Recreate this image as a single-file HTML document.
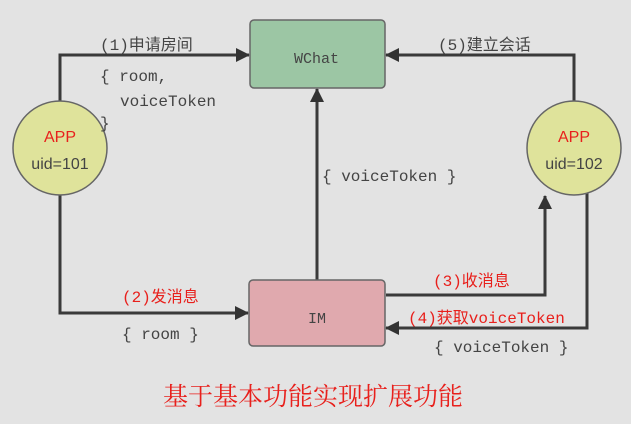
<!DOCTYPE html>
<html><head><meta charset="utf-8"><style>
body{margin:0;width:631px;height:419px;background:#e3e3e3;overflow:hidden}
.m{font-family:"Liberation Mono","Noto Sans CJK SC",monospace}
.s{font-family:"Liberation Sans","Noto Sans CJK SC",sans-serif}
</style></head><body>
<svg width="631" height="419" viewBox="0 0 631 419" xmlns="http://www.w3.org/2000/svg">
<defs><marker id="a" markerWidth="14" markerHeight="14" refX="13" refY="7" orient="auto" markerUnits="userSpaceOnUse"><path d="M0,0 L14,7 L0,14 z" fill="#333"/></marker></defs>
<g stroke="#3a3a3a" stroke-width="3" fill="none">
<path d="M60,101 V55 H249" marker-end="url(#a)"/>
<path d="M574,101 V55 H386" marker-end="url(#a)"/>
<path d="M317,280 V89" marker-end="url(#a)"/>
<path d="M60,195 V313 H248" marker-end="url(#a)"/>
<path d="M386,295 H545 V196" marker-end="url(#a)"/>
<path d="M587,193 V328 H386" marker-end="url(#a)"/>
</g>
<rect x="250" y="20" width="135" height="68" rx="4" fill="#9cc6a4" stroke="#666" stroke-width="1.5"/>
<rect x="249" y="280" width="136" height="66" rx="4" fill="#e0a9ae" stroke="#666" stroke-width="1.5"/>
<circle cx="60" cy="148" r="47" fill="#dfe39b" stroke="#666" stroke-width="1.5"/>
<circle cx="574" cy="148" r="47" fill="#dfe39b" stroke="#666" stroke-width="1.5"/>
<text class="m" x="294" y="63" font-size="15" fill="#444">WChat</text>
<text class="m" x="308" y="323" font-size="15" fill="#444">IM</text>
<g class="s" text-anchor="middle" font-size="16">
<text x="60" y="142" fill="#e8201c">APP</text>
<text x="60" y="169" fill="#444">uid=101</text>
<text x="574" y="142" fill="#e8201c">APP</text>
<text x="574" y="169" fill="#444">uid=102</text>
</g>
<g class="m" font-size="16" fill="#444">
<text x="100" y="50">(1)申请房间</text>
<text x="100" y="81">{ room,</text>
<text x="120" y="106">voiceToken</text>
<text x="100" y="128">}</text>
<text x="322" y="181">{ voiceToken }</text>
<text x="438" y="50">(5)建立会话</text>
<text x="122" y="339">{ room }</text>
<text x="434" y="352">{ voiceToken }</text>
</g>
<g class="m" font-size="16" fill="#e8201c">
<text x="122" y="302">(2)发消息</text>
<text x="433" y="286">(3)收消息</text>
<text x="408" y="323">(4)获取voiceToken</text>
</g>
<text x="163" y="405" font-size="25" fill="#e8201c" style="font-family:'Liberation Serif','Noto Serif CJK SC',serif">基于基本功能实现扩展功能</text>
</svg>
</body></html>
